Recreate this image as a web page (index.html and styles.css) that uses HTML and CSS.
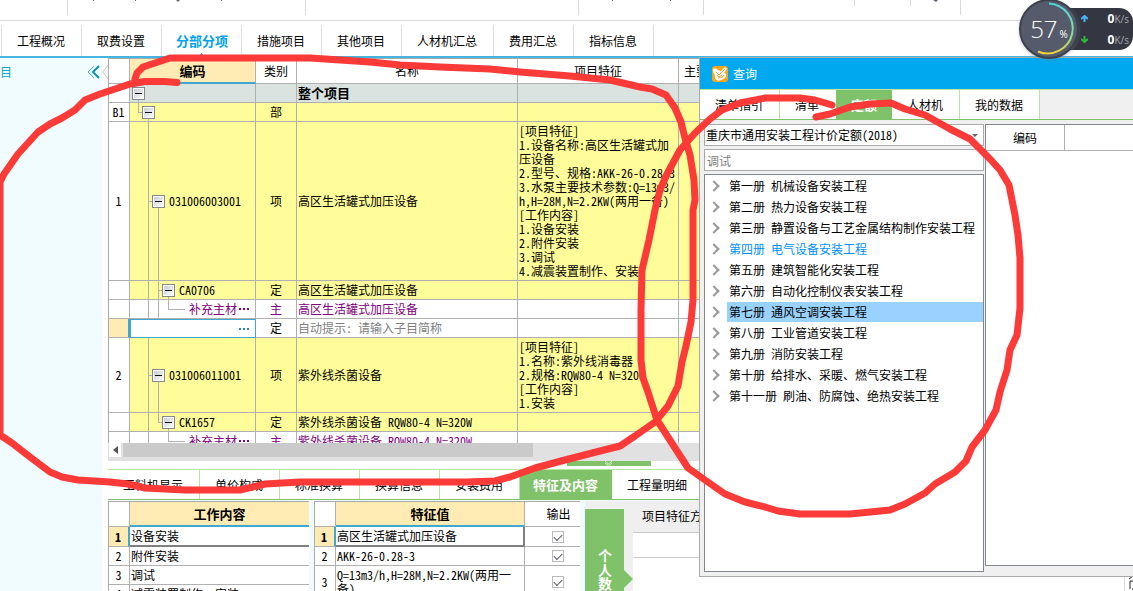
FILE: index.html
```html
<!DOCTYPE html>
<html lang="zh-CN">
<head>
<meta charset="utf-8">
<title>分部分项</title>
<link rel="stylesheet" href="styles.css">
</head>
<body>
<div class="app">
  <div class="ribbon" aria-hidden="true">
    <svg class="ribbon-marks" width="1133" height="20"><path d="M67.5 0V15M305.5 0V15M578.5 0V15M703.5 0V15M854.5 0V6M910.5 0V6M960.5 0V15" stroke="#d9d9d9"/><path d="M93 0h1v1h-1zM135 0h1v1h-1zM176 0h4l-2 2zM221 0h1v1h-1zM612 0h1v1h-1zM670 0h1v1h-1zM933 0h5l-2 2z" fill="#667"/></svg>
  </div>
  <nav class="tabs top-tabs">
    <button>工程概况</button><button>取费设置</button><button class="active">分部分项</button><button>措施项目</button><button>其他项目</button><button>人材机汇总</button><button>费用汇总</button><button>指标信息</button>
  </nav>
  <div class="workspace">
    <aside class="side">
      <span>目</span>
      <button class="collapse" aria-label="收起"><svg width="13" height="14" fill="none"><path d="M7 1L1 7l6 6" stroke="#42b9d4"/><path d="M12 1L6 7l6 6" stroke="#0c8fb8" stroke-width="2"/></svg></button>
    </aside>
    <div class="gutter"><svg width="6" height="16" fill="none"><path d="M6 1L1 8l5 7" stroke="#ccc"/></svg></div>
    <main class="main">
      <div class="grid-view">
        <table class="grid bill">
          <colgroup><col class="c-no"><col class="c-code"><col class="c-kind"><col class="c-name"><col class="c-feature"><col></colgroup>
          <thead><tr><th></th><th class="picked">编码</th><th>类别</th><th>名称</th><th>项目特征</th><th class="left">主要清单</th></tr></thead>
          <tbody>
            <tr class="group"><td></td><td class="g0"><div class="node l0"><button class="box" aria-label="折叠"></button></div></td><td></td><td><b>整个项目</b></td><td></td><td></td></tr>
            <tr class="hot"><td>B1</td><td class="g1"><div class="node l1"><button class="box" aria-label="折叠"></button></div></td><td>部</td><td></td><td></td><td></td></tr>
            <tr class="hot"><td>1</td><td class="g2"><div class="node l2"><button class="box" aria-label="折叠"></button>031006003001</div></td><td>项</td><td>高区生活罐式加压设备</td><td>[项目特征]<br>1.设备名称:高区生活罐式加<br>压设备<br>2.型号、规格:AKK-26-0.28-3<br>3.水泵主要技术参数:Q=13m3/<br>h,H=28M,N=2.2KW(两用一备)<br>[工作内容]<br>1.设备安装<br>2.附件安装<br>3.调试<br>4.减震装置制作、安装</td><td></td></tr>
            <tr class="hot"><td></td><td class="g3"><div class="node l3"><button class="box" aria-label="折叠"></button>CA0706</div></td><td>定</td><td>高区生活罐式加压设备</td><td></td><td></td></tr>
            <tr class="material"><td></td><td class="g4"><div class="node leaf">补充主材<svg class="dots" width="12" height="2"><path d="M1 0h2v2H1zM5 0h2v2H5zM9 0h2v2H9z"/></svg></div></td><td>主</td><td>高区生活罐式加压设备</td><td></td><td></td></tr>
            <tr class="editing"><td></td><td><svg class="dots" width="12" height="2"><path d="M1 0h2v2H1zM5 0h2v2H5zM9 0h2v2H9z"/></svg></td><td>定</td><td class="hint">自动提示: 请输入子目简称</td><td></td><td></td></tr>
            <tr class="hot"><td>2</td><td class="g2"><div class="node l2"><button class="box" aria-label="折叠"></button>031006011001</div></td><td>项</td><td>紫外线杀菌设备</td><td>[项目特征]<br>1.名称:紫外线消毒器<br>2.规格:RQW80-4 N=320W<br>[工作内容]<br>1.安装</td><td></td></tr>
            <tr class="hot"><td></td><td class="g5"><div class="node l3"><button class="box" aria-label="折叠"></button>CK1657</div></td><td>定</td><td>紫外线杀菌设备 RQW80-4 N=320W</td><td></td><td></td></tr>
            <tr class="material"><td></td><td class="g6"><div class="node leaf">补充主材<svg class="dots" width="12" height="2"><path d="M1 0h2v2H1zM5 0h2v2H5zM9 0h2v2H9z"/></svg></div></td><td>主</td><td>紫外线杀菌设备 RQW80-4 N=320W</td><td></td><td></td></tr>
          </tbody>
        </table>
      </div>
      <div class="scrollbar"><button class="scroll-left" aria-label="向左"><svg width="5" height="8"><path d="M5 0v8L0 4z" fill="#555"/></svg></button><div class="thumb"></div></div>
      <div class="splitter"><button class="handle" aria-label="收起面板"><svg width="9" height="6" fill="none" stroke="#d9f5cc"><path d="M1 0l3.500 3L8 0M1 2l3.500 3L8 2"/></svg></button></div>
      <nav class="tabs green-tabs">
        <button>工料机显示</button><button>单价构成</button><button>标准换算</button><button>换算信息</button><button>安装费用</button><button class="active wide">特征及内容</button><button>工程量明细</button>
      </nav>
      <div class="detail">
        <div class="pane work">
          <table class="grid">
            <colgroup><col class="c-no"><col></colgroup>
            <thead><tr><th></th><th class="picked">工作内容</th></tr></thead>
            <tbody>
              <tr class="current"><td>1</td><td>设备安装</td></tr>
              <tr><td>2</td><td>附件安装</td></tr>
              <tr><td>3</td><td>调试</td></tr>
              <tr><td>4</td><td>减震装置制作、安装</td></tr>
            </tbody>
          </table>
        </div>
        <div class="pane values">
          <table class="grid">
            <colgroup><col class="c-no"><col><col class="c-out"></colgroup>
            <thead><tr><th></th><th class="picked">特征值</th><th class="out">输出</th></tr></thead>
            <tbody>
              <tr class="current"><td>1</td><td>高区生活罐式加压设备</td><td><input type="checkbox" checked aria-label="输出 1"></td></tr>
              <tr><td>2</td><td>AKK-26-0.28-3</td><td><input type="checkbox" checked aria-label="输出 2"></td></tr>
              <tr><td>3</td><td>Q=13m3/h,H=28M,N=2.2KW(两用一<br>备)</td><td><input type="checkbox" checked aria-label="输出 3"></td></tr>
            </tbody>
          </table>
        </div>
        <div class="data-side">
          <button class="vertical-tab">个人数据</button>
          <svg class="pointer" width="9" height="18"><path d="M0 0l9 9-9 9z" fill="#80c269"/></svg>
        </div>
        <div class="scheme">
          <div class="scheme-head">项目特征方案</div>
          <div class="scheme-row"></div>
          <div class="scheme-body"><svg class="edge" width="9" height="16" fill="none"><path d="M.5 0v16" stroke="#ddd"/><path d="M9 1L5 4M9 6H6v8M9 14h-1" stroke="#222"/></svg></div>
        </div>
      </div>
    </main>
  </div>

  <section class="dialog" aria-label="查询">
    <header class="title"><svg width="16" height="16"><rect width="16" height="16" rx="3" fill="#f9a51a"/><path d="M1 3c3-1 4 0 5 1l3 1 4-4 2 2-3 4 2 1c1 3-2 5-5 6-3 2-6 0-6-3 0-3-2-4-2-8z" fill="#fff"/><path d="M4 6l3 3 6-6M6 12c3 0 5-1 6-3M5 9l2 2 3-2" stroke="#f0a02a" fill="none"/></svg><span>查询</span></header>
    <nav class="tabs green-tabs">
      <button>清单指引</button><button class="before">清单</button><button class="active">定额</button><button>人材机</button><button>我的数据</button>
    </nav>
    <div class="dialog-body">
      <div class="finder">
        <div class="combo"><select aria-label="定额库"><option>重庆市通用安装工程计价定额(2018)</option></select><svg width="6" height="3"><path d="M0 0h6L3 3z" fill="#667"/></svg></div>
        <input class="search" type="text" placeholder="调试" aria-label="搜索">
        <ul class="books">
          <li><span>第一册 机械设备安装工程</span></li>
          <li><span>第二册 热力设备安装工程</span></li>
          <li><span>第三册 静置设备与工艺金属结构制作安装工程</span></li>
          <li class="blue"><span>第四册 电气设备安装工程</span></li>
          <li><span>第五册 建筑智能化安装工程</span></li>
          <li><span>第六册 自动化控制仪表安装工程</span></li>
          <li class="selected"><span>第七册 通风空调安装工程</span></li>
          <li><span>第八册 工业管道安装工程</span></li>
          <li><span>第九册 消防安装工程</span></li>
          <li><span>第十册 给排水、采暖、燃气安装工程</span></li>
          <li><span>第十一册 刷油、防腐蚀、绝热安装工程</span></li>
        </ul>
      </div>
      <div class="result">
        <table class="grid"><colgroup><col class="c-result"><col></colgroup><thead><tr><th>编码</th><th></th></tr></thead></table>
      </div>
    </div>
  </section>

  <div class="monitor">
    <div class="speed">
      <div><svg width="7" height="7" fill="none" stroke="#48b5f5" stroke-width="2"><path d="M3.500 7V1M0 4l3.500-3L7 4"/></svg><span><b>0</b>K/s</span></div>
      <div><svg width="7" height="7" fill="none" stroke="#2db83d" stroke-width="2"><path d="M3.500 0v6M0 3l3.500 3L7 3"/></svg><span><b>0</b>K/s</span></div>
    </div>
    <div class="dial">
      <svg width="60" height="60" fill="none">
        <defs><linearGradient id="arc" x1="0" y1="0" x2="0" y2="1"><stop offset="0" stop-color="#54d5e3"/><stop offset=".6" stop-color="#7fe0a0"/><stop offset="1" stop-color="#f0d03c"/></linearGradient></defs>
        <circle cx="30" cy="30" r="29" fill="#565b6b" stroke="#3d414d" stroke-width="2"/>
        <path d="M30 4.500A25 25 0 1 1 19 52.500" stroke="url(#arc)" stroke-width="2"/>
      </svg>
      <p>57<small>%</small></p>
    </div>
  </div>

  <svg class="marker" width="1133" height="591" fill="none" stroke="#fc3a38" stroke-width="7" stroke-linecap="round" stroke-linejoin="round">
    <path d="M177 82.500L165 81.500H145L130 84L100 94L85 100L75 110L62 118L50 124L38 132L28 143L18 154L11 164L4 174L0 182V435L12 443L30 457L50 472L62 477L78 480L110 482L128 484L145 488L185 490L240 490L265 484L300 482H466L495 481L510 477L535 468L565 460L600 451L620 446L635 436L655 422L668 406L678 386L682 362L686 346L691 322L693 300V210L695 200L694 180L690 155L685 138L681 122L675 108L666 95L652 89L640 87L610 80L570 76L520 72L490 69L440 67L400 65L370 62L310 58H170L155 63L143 67L137 73L135 79"/>
    <path d="M816 117L830 114L850 107L870 104L891 103L905 109L925 115L950 129L970 139L978 147L990 159L1000 170L1009 185L1015 215L1018 235L1020 258V308L1017 335L1010 350L1007 370L1000 392L996 410L985 430L972 447L966 461L955 472L935 484L925 493L905 504L890 510L850 514H800L778 511L765 507L745 502L725 494L705 480L688 468L675 448L657 420L648 392L643 378L641 360V310L642 270L649 240L655 210L660 190L667 174L680 150L695 133L710 119L722 110L740 103L765 98L800 98L815 100L832 105"/>
  </svg>
</div>
</body>
</html>
```

FILE: styles.css
```css
* { box-sizing: border-box; }
body, p, ul { margin: 0; padding: 0; }
body {
  font: 12px/14px "Noto Sans Mono CJK SC", "Noto Sans CJK SC", sans-serif;
  color: #000;
  background: #fff;
}
button, input, select { font: inherit; color: inherit; }
button { border: 0; padding: 0; background: none; }
svg { display: block; flex: none; }

.app { position: relative; display: flex; flex-direction: column; height: 100vh; overflow: hidden; }
.ribbon { height: 21px; flex: none; border-bottom: 1px solid #ddd; overflow: hidden; }

.tabs { display: flex; flex: none; }
.tabs button { padding: 0 16px 0 15px; border-right: 1px solid #ddd; white-space: nowrap; background: #fff; }
.top-tabs { height: 37px; padding: 4px 0 0 1px; border-bottom: 2px solid #45b5e0; }
.top-tabs button:first-child { border-left: 1px solid #ddd; }
.top-tabs .active {
  padding: 0 13px 0 14px;
  color: #00a2e8;
  font-weight: bold;
  font-size: 13px;
  background: conic-gradient(from 135deg at 50% 0, #45b5e0 90deg, transparent 0) center bottom / 6px 3px no-repeat;
}

.workspace { display: flex; flex: 1; min-height: 0; }
.side { display: flex; justify-content: space-between; align-items: flex-start; width: 102px; flex: none; padding: 7px 2px 0 0; background: #f0fcff; color: #12a5d0; }
.gutter { width: 6px; flex: none; padding-top: 6px; }
.main { display: flex; flex-direction: column; flex: 1; min-width: 0; }

.grid { width: 100%; table-layout: fixed; border-collapse: separate; border-spacing: 0; border: solid #aaa; border-width: 1px 0 0 1px; }
.grid th, .grid td { height: 19px; padding: 2px 1px; border: solid #b0b0b0; border-width: 0 1px 1px 0; white-space: nowrap; overflow: hidden; text-align: left; }
.grid th { height: 25px; padding: 0; font-weight: normal; text-align: center; }
.grid th.left { text-align: left; padding-left: 5px; }
.grid th.picked { background: #ffebb3; border-bottom: 2px solid #40a8d0; font-weight: bold; font-size: 13px; }
.grid td:first-child { padding: 2px 1px 2px 0; text-align: center; }
.c-no { width: 21px; }
.c-code { width: 126px; }
.c-kind { width: 41px; }
.c-name { width: 221px; }
.c-feature { width: 161px; }
.c-out { width: 55px; }
.c-result { width: 79px; }

.grid-view { height: 385px; flex: none; overflow: hidden; }
.bill td:nth-child(2) { padding: 0; background-repeat: no-repeat; }
.bill td:nth-child(3) { text-align: center; }
.group td { background-color: #dae3df; }
.hot td { background-color: #fffd99; }
.bill tbody td:first-child { background-color: #fff; }
.group b { font-size: 13px; }
.material td { color: #800080; }
.editing .hint { color: #808080; }
.bill .editing td:first-child { background-color: #ffebb3; border-right: 2px solid #40a8d0; }
.bill .editing td:nth-child(2) { border: 1px solid #40a8d0; color: #2580d0; }
.editing .dots { margin: 0 5px 0 auto; }
.dots { fill: currentColor; }
.leaf .dots { margin-left: 1px; }

.node { display: flex; align-items: center; gap: 4px; height: 18px; }
.l0 { padding-left: 2px; }
.l1 { padding-left: 12px; }
.l2 { padding-left: 22px; }
.l3 { padding-left: 32px; }
.leaf { padding-left: 59px; gap: 0; }
.box { width: 13px; height: 13px; flex: none; border: 1px solid #85898f; background: linear-gradient(#111, #111) center / 7px 1px no-repeat, linear-gradient(135deg, #c4c9d2, #fff); box-shadow: inset 0 0 0 1px #fff; }

.g0, .g1, .g2, .g3, .g4, .g5, .g6 { --line: linear-gradient(#b0b0b0, #b0b0b0); background-image: var(--line), var(--line), var(--line), var(--line); }
.g0 { background-position: 8px 100%; background-size: 1px 50%, 0 0, 0 0, 0 0; }
.g1 { background-position: 8px 0, 8px 50%, 18px 100%, 0 0; background-size: 1px 50%, 5px 1px, 1px 50%, 0 0; }
.g2 { background-position: 18px 0, 18px 50%, 28px 100%, 0 0; background-size: 1px 100%, 5px 1px, 1px 50%, 0 0; }
.g3 { background-position: 18px 0, 28px 0, 28px 50%, 38px 100%; background-size: 1px 100%, 1px 100%, 5px 1px, 1px 50%; }
.g4 { background-position: 18px 0, 28px 0, 38px 0, 38px 50%; background-size: 1px 100%, 1px 100%, 1px 50%, 17px 1px; }
.g5 { background-position: 18px 0, 28px 0, 28px 50%, 38px 100%; background-size: 1px 100%, 1px 50%, 5px 1px, 1px 50%; }
.g6 { background-position: 18px 0, 38px 0, 38px 50%, 0 0; background-size: 1px 100%, 1px 50%, 17px 1px, 0 0; }

.scrollbar { display: flex; gap: 2px; height: 18px; flex: none; padding: 0 0 4px 1px; background: #e1e1e1; }
.scroll-left { display: flex; align-items: center; justify-content: center; width: 12px; background: #fff; }
.thumb { width: 40%; background: #cacaca; }
.splitter { display: flex; justify-content: center; align-items: flex-start; height: 8px; flex: none; padding-right: 24px; }
.handle { display: flex; justify-content: center; width: 84px; height: 5px; background: #80c269; }

.green-tabs { border-top: 1px solid #b5e69b; border-bottom: 1px solid #80c269; }
.green-tabs button { height: 29px; border-color: #b5e69b; }
.green-tabs .active { padding: 0 15px; border: 0; background: #80c269; color: #fff; font-weight: bold; font-size: 13px; }
.green-tabs .wide { padding: 0 14px 0 13px; }
.green-tabs .before { padding-right: 17px; border: 0; }

.detail { display: flex; flex: 1; min-height: 0; gap: 5px; padding-top: 1px; background: #f0fcff; }
.pane { overflow: hidden; flex: none; background: #fff; }
.work { width: 201px; }
.values { width: 266px; }
.pane .grid th:last-child, .pane .grid td:last-child { border-right: 0; }
.current td { font-weight: bold; }
.current td:first-child { background: #ffebb3; border-right: 2px solid #40a8d0; }
.current td:nth-child(2) { font-weight: normal; border-bottom: 2px solid #808080; }
.values .current td:nth-child(2) { border-right: 2px solid #808080; }
.pane .grid th.out { padding-left: 12px; }
.values td:nth-child(3) { padding: 0 0 0 10px; text-align: center; }
.values input { appearance: none; display: block; width: 12px; height: 12px; margin: 0 auto; border: 1px solid #bbb; background: #fff; }
.values input:checked::after { content: ""; display: block; width: 7px; height: 4px; margin: 2px 0 0 1px; border: solid #556; border-width: 0 0 1px 1px; transform: rotate(-45deg); }
.data-side { display: flex; align-items: flex-start; width: 48px; flex: none; padding-top: 8px; background: #efefef; overflow: hidden; }
.vertical-tab { width: 39px; height: 136px; flex: none; background: #80c269; color: #fff; font-weight: bold; writing-mode: vertical-rl; line-height: 35px; font-size: 14px; }
.pointer { margin-top: 61px; }
.scheme { display: flex; flex-direction: column; flex: 1; margin-left: -5px; background: #fff; }
.scheme-head { height: 32px; flex: none; padding: 8px 9px; border-bottom: 1px solid #ccc; background: #efefef; }
.scheme-row { height: 25px; flex: none; border-bottom: 1px solid #ccc; }
.scheme-body { display: flex; flex: 1; justify-content: flex-end; align-items: flex-end; }

.dialog { position: absolute; left: 699px; top: 57px; right: 0; height: 520px; display: flex; flex-direction: column; border: solid #aaa; border-width: 1px 0 1px 1px; background: #f0f0f0; }
.title { display: flex; align-items: center; gap: 5px; height: 31px; flex: none; padding-left: 12px; background: #00a8f0; color: #fff; }
.dialog-body { display: flex; flex: 1; gap: 1px; min-height: 0; padding: 4px 0 4px 4px; }
.finder { display: flex; flex-direction: column; width: 280px; flex: none; gap: 3px; }
.combo { display: flex; align-items: center; height: 22px; flex: none; padding-right: 5px; border: 1px solid #aaa; background: #fff; }
.combo select { appearance: none; flex: 1; min-width: 0; height: 20px; padding: 0 0 0 1px; border: 0; background: none; }
.search { height: 22px; flex: none; padding: 0 2px; border: 1px solid #aaa; border-radius: 0; background: #fff; }
.search::placeholder { color: #808080; }
.books { flex: 1; border: 1px solid #828790; background: #fff; list-style: none; }
.books li { display: flex; align-items: center; height: 21px; }
.books li::before { content: ""; width: 6px; height: 6px; margin: 0 9px 0 5px; border: solid #999; border-width: 2px 2px 0 0; transform: rotate(45deg); }
.books span { flex: 1; padding: 3px 2px; }
.books .blue { color: #0090ff; }
.books .selected span { background: #99d1ff; }
.result { flex: 1; min-width: 0; margin-bottom: 6px; border: solid #828790; border-width: 1px 0 1px 1px; background: #fff; }
.result .grid { border: 0; }
.result .grid th { height: 26px; }
.result .grid th:last-child { border-right: 0; }

.monitor { position: absolute; right: 0; top: 0; display: flex; width: 114px; height: 60px; font-family: "Open Sans", sans-serif; color: #a4a8b2; }
.speed { display: flex; flex-direction: column; justify-content: space-around; width: 70px; height: 42px; margin: 8px 0 0 auto; padding: 0 4px 0 18px; border-radius: 0 14px 14px 0; background: #343741; }
.speed div { display: flex; justify-content: space-between; align-items: center; font-size: 10px; }
.speed b { color: #fff; font-size: 12px; }
.dial { position: absolute; left: 0; top: -1px; border-radius: 50%; box-shadow: 0 1px 3px #8888; }
.dial p { position: absolute; inset: 0; display: flex; justify-content: center; align-items: center; color: #fff; font-size: 24px; font-weight: 300; }
.dial small { padding: 9px 0 0 2px; font-size: 10px; font-weight: 400; }
.marker { position: absolute; left: 0; top: 0; pointer-events: none; }
```
